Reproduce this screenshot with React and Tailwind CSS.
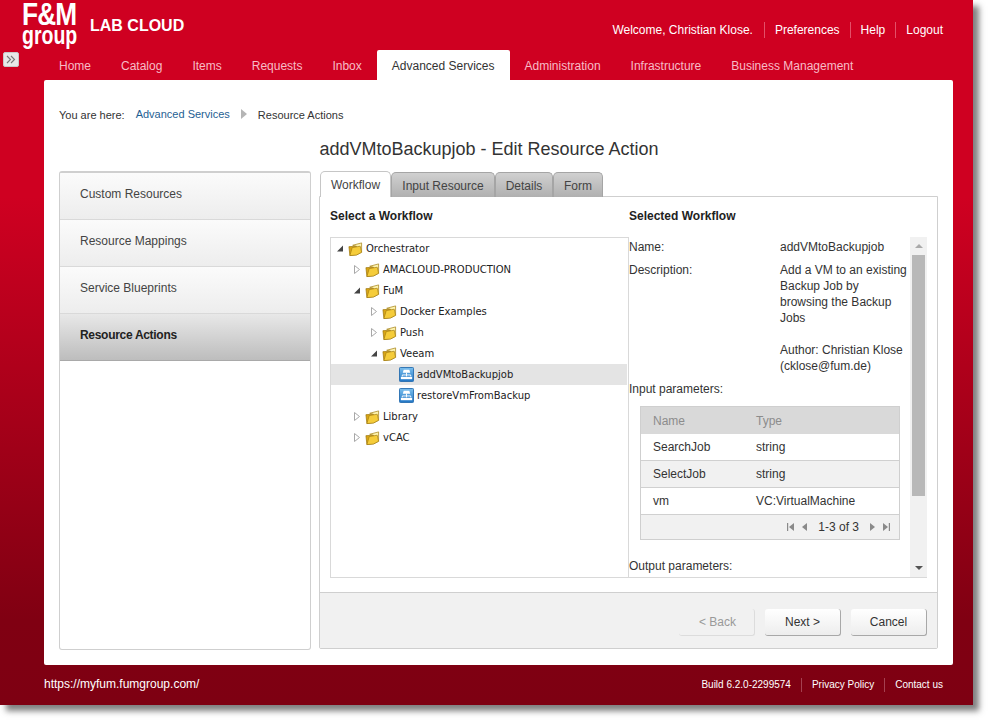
import React from "react";

const Folder = () => (
  <svg width="15" height="16" viewBox="0 0 16 16" className="shrink-0">
    <path d="M1 5.5 L9 5 L9.5 14 L2 15 Z" fill="#d9a514" stroke="#a07a10" strokeWidth="0.8" />
    <path d="M5 4 L14.5 1.5 L14.5 11.5 L9.5 14 L9 5 Z" fill="#fdf3b0" stroke="#a8861c" strokeWidth="0.8" />
    <path d="M2 15 L4.5 6.5 L13 5 L14.5 11.5 L9 14.5 Z" fill="#f5cc3a" stroke="#a07a10" strokeWidth="0.7" />
  </svg>
);

const Flow = () => (
  <svg width="15" height="15" viewBox="0 0 16 16" className="shrink-0">
    <defs>
      <linearGradient id="flowg" x1="0" y1="0" x2="0" y2="1">
        <stop offset="0" stopColor="#7cc0ee" />
        <stop offset="1" stopColor="#1f74c4" />
      </linearGradient>
    </defs>
    <rect x="0.5" y="0.5" width="15" height="15" rx="1" fill="url(#flowg)" stroke="#2a6fb0" />
    <path d="M5 3 H11 L12 6 H4 Z" fill="#fff" />
    <path d="M8 6 V10 M3.5 10 V8.5 H12.5 V10" stroke="#fff" strokeWidth="1" fill="none" />
    <rect x="2" y="10.5" width="12" height="2.5" fill="#fff" />
  </svg>
);

const Caret = ({ open }) => (
  <svg width="8" height="9" viewBox="0 0 8 9" className="shrink-0">
    {open ? (
      <path d="M1 7.5 L7 7.5 L7 1.5 Z" fill="#444" />
    ) : (
      <path d="M1.5 0.5 L6.5 4.5 L1.5 8.5 Z" fill="#fff" stroke="#a8a8a8" />
    )}
  </svg>
);

const treeRows = [
  { d: 0, t: "Orchestrator", c: "open", i: "f" },
  { d: 1, t: "AMACLOUD-PRODUCTION", c: "closed", i: "f" },
  { d: 1, t: "FuM", c: "open", i: "f" },
  { d: 2, t: "Docker Examples", c: "closed", i: "f" },
  { d: 2, t: "Push", c: "closed", i: "f" },
  { d: 2, t: "Veeam", c: "open", i: "f" },
  { d: 3, t: "addVMtoBackupjob", i: "w", sel: true },
  { d: 3, t: "restoreVmFromBackup", i: "w" },
  { d: 1, t: "Library", c: "closed", i: "f" },
  { d: 1, t: "vCAC", c: "closed", i: "f" },
];

const padClass = ["pl-[5px]", "pl-[22px]", "pl-[39px]", "pl-[56px]"];

function TreeRow({ r }) {
  return (
    <div className={`mr-[1px] flex h-[21px] items-center ${padClass[r.d]} ${r.sel ? "bg-[#e4e4e4]" : ""}`}>
      <div className="flex w-[12px] shrink-0 items-center">{r.c && <Caret open={r.c === "open"} />}</div>
      <div className="flex w-[18px] shrink-0 items-center justify-start">{r.i === "f" ? <Folder /> : <Flow />}</div>
      <span className="font-['DejaVu_Sans'] text-[10px] text-[#222]">{r.t}</span>
    </div>
  );
}

const TopNav = ["Home", "Catalog", "Items", "Requests", "Inbox"];
const TopNav2 = ["Administration", "Infrastructure", "Business Management"];

const PagerIcon = ({ d }) => (
  <svg width="9" height="10" viewBox="0 0 9 10">
    <path d={d} fill="#8a8a8a" />
  </svg>
);

export default function App() {
  return (
    <div className="h-[720px] w-[988px] overflow-hidden bg-white font-['Liberation_Sans',sans-serif]">
      <div className="flex h-[705px] w-[973px] flex-col bg-[linear-gradient(180deg,#cf0021_0%,#cf0021_28%,#800012_88%,#7e0012_100%)] shadow-[6px_6px_6px_rgba(60,60,60,0.65)]">
        {/* Header */}
        <div className="flex h-[50px] shrink-0">
          <div className="ml-[22px] flex w-[68px] flex-col items-start pt-[2px] text-white">
            <div className="h-[24px] origin-left scale-x-[0.82] whitespace-nowrap text-[32px] leading-[24px] font-bold tracking-[-1px]">F&amp;M</div>
            <div className="h-[22px] origin-left scale-x-[0.78] whitespace-nowrap text-[25px] leading-[18px] font-bold">group</div>
          </div>
          <div className="pt-[17px] text-[16px] leading-[18px] font-bold text-white">LAB CLOUD</div>
          <div className="ml-auto mr-[30px] flex items-start pt-[22px] text-[12px] leading-[16px] text-white">
            <span className="border-r border-[#e35068] pr-[11px]">Welcome, Christian Klose.</span>
            <span className="border-r border-[#e35068] px-[10px]">Preferences</span>
            <span className="border-r border-[#e35068] px-[10px]">Help</span>
            <span className="pl-[10px]">Logout</span>
          </div>
        </div>
        {/* Nav */}
        <div className="relative flex h-[30px] shrink-0 pl-[44px] text-[12px] text-[#f7bcc6]">
          <div className="absolute left-[3px] top-[2px] flex h-[15px] w-[16px] items-center justify-center rounded-[2px] border border-[#c9c9c9] bg-[#e8e8e8]">
            <svg width="10" height="9" viewBox="0 0 10 9" fill="none" stroke="#777" strokeWidth="1.1">
              <path d="M1 1 L4.5 4.5 L1 8 M5 1 L8.5 4.5 L5 8" />
            </svg>
          </div>
          {TopNav.map((n) => (
            <div key={n} className="flex items-center px-[15px] pt-[2px]">{n}</div>
          ))}
          <div className="flex items-center rounded-t-[2px] bg-white px-[15px] pt-[2px] text-[#333]">Advanced Services</div>
          {TopNav2.map((n) => (
            <div key={n} className="flex items-center px-[15px] pt-[2px]">{n}</div>
          ))}
        </div>
        {/* Main */}
        <div className="ml-[44px] flex h-[585px] w-[909px] shrink-0 flex-col rounded-[2px] bg-white px-[15px] text-[#333]">
          <div className="flex h-[35px] shrink-0 items-center gap-[11px] pt-[34px] text-[11px] leading-[14px]">
            <span>You are here:</span>
            <span className="mb-[2px] text-[#1f5f93]">Advanced Services</span>
            <svg width="6" height="10" viewBox="0 0 6 10" className="mb-[2px]"><path d="M0 0 L6 5 L0 10 Z" fill="#b5b5b5" /></svg>
            <span>Resource Actions</span>
          </div>
          <div className="mt-[21px] flex h-[26px] shrink-0 items-center justify-center pr-[19px] text-[18px] text-[#333]">
            addVMtoBackupjob - Edit Resource Action
          </div>
          <div className="mt-[9px] flex h-[479px] gap-[8px]">
            {/* Sidebar */}
            <div className="h-[479px] w-[252px] shrink-0 overflow-hidden rounded-[3px] border border-[#cfcfcf] border-t-[2px] bg-white text-[12px]">
              {["Custom Resources", "Resource Mappings", "Service Blueprints"].map((s) => (
                <div key={s} className="flex h-[47px] items-center border-b border-[#d9d9d9] bg-[linear-gradient(180deg,#fbfbfb,#ededed)] pb-[4px] pl-[20px] text-[#444]">{s}</div>
              ))}
              <div className="flex h-[47px] items-center border-b border-[#a9a9a9] bg-[linear-gradient(180deg,#e8e8e8,#bdbdbd)] pb-[4px] pl-[20px] font-bold tracking-[-0.3px] text-[#222]">Resource Actions</div>
            </div>
            {/* Right */}
            <div className="flex h-[479px] w-[619px] shrink-0 flex-col">
              <div className="relative z-10 ml-[1px] flex h-[26px] shrink-0 items-end text-[12px]">
                <div className="flex h-[26px] w-[71px] items-center justify-center rounded-t-[5px] border border-b-0 border-[#c6c6c6] bg-white pt-[1px] text-[#444]">Workflow</div>
                <div className="flex h-[25px] w-[104px] items-center justify-center rounded-t-[5px] border border-b-0 border-[#a5a5a5] bg-[linear-gradient(180deg,#d0d0d0,#b0b0b0)] pt-[1px] text-[#444]">Input Resource</div>
                <div className="flex h-[25px] w-[58px] items-center justify-center rounded-t-[5px] border border-b-0 border-[#a5a5a5] bg-[linear-gradient(180deg,#d0d0d0,#b0b0b0)] pt-[1px] text-[#444]">Details</div>
                <div className="flex h-[25px] w-[50px] items-center justify-center rounded-t-[5px] border border-b-0 border-[#a5a5a5] bg-[linear-gradient(180deg,#d0d0d0,#b0b0b0)] pt-[1px] text-[#444]">Form</div>
              </div>
              <div className="-mt-px flex h-[453px] flex-col rounded-b-[2px] border border-[#cfcfcf]">
                <div className="flex h-[395px] shrink-0 pl-[10px] pr-[10px]">
                  <div className="w-[299px] shrink-0">
                    <div className="flex h-[40px] items-center pb-[3px] text-[12px] font-bold text-[#222]">Select a Workflow</div>
                    <div className="h-[341px] border border-[#d9d9d9]">
                      {treeRows.map((r) => (
                        <TreeRow key={r.t} r={r} />
                      ))}
                    </div>
                  </div>
                  <div className="w-[298px] shrink-0">
                    <div className="flex h-[40px] items-center pb-[3px] text-[12px] font-bold text-[#222]">Selected Workflow</div>
                    <div className="flex h-[341px] border-b border-[#d9d9d9] text-[12px] leading-[16px] text-[#333]">
                      <div className="h-full w-[281px] shrink-0 overflow-hidden pt-[2px]">
                        <div className="flex h-[23px]">
                          <div className="w-[151px] shrink-0">Name:</div>
                          <div>addVMtoBackupjob</div>
                        </div>
                        <div className="flex">
                          <div className="w-[151px] shrink-0">Description:</div>
                          <div className="w-[130px]">
                            Add a VM to an existing<br />Backup Job by<br />browsing the Backup<br />Jobs
                            <div className="h-[16px]" />
                            Author: Christian Klose<br />(cklose@fum.de)
                          </div>
                        </div>
                        <div className="mt-[7px]">Input parameters:</div>
                        <div className="ml-[11px] mt-[9px] w-[260px] border border-[#cfcfcf]">
                          <div className="flex h-[27px] items-center bg-[#d9d9d9] pl-[12px] text-[#8c8c8c]">
                            <div className="w-[103px]">Name</div><div>Type</div>
                          </div>
                          <div className="flex h-[27px] items-center border-b border-[#d0d0d0] bg-white pl-[12px]">
                            <div className="w-[103px]">SearchJob</div><div>string</div>
                          </div>
                          <div className="flex h-[27px] items-center border-b border-[#d0d0d0] bg-[#f1f1f1] pl-[12px]">
                            <div className="w-[103px]">SelectJob</div><div>string</div>
                          </div>
                          <div className="flex h-[27px] items-center border-b border-[#d0d0d0] bg-white pl-[12px]">
                            <div className="w-[103px]">vm</div><div>VC:VirtualMachine</div>
                          </div>
                          <div className="flex h-[24px] items-center justify-end gap-[5px] bg-[#f1f1f1] pr-[8px]">
                            <PagerIcon d="M1 1 H2.2 V9 H1 Z M8 1 V9 L3 5 Z" />
                            <PagerIcon d="M7 1 V9 L2 5 Z" />
                            <span className="mx-[4px]">1-3 of 3</span>
                            <PagerIcon d="M2 1 V9 L7 5 Z" />
                            <PagerIcon d="M1 1 V9 L6 5 Z M6.8 1 H8 V9 H6.8 Z" />
                          </div>
                        </div>
                        <div className="mt-[18px]">Output parameters:</div>
                      </div>
                      <div className="flex h-full w-[17px] shrink-0 flex-col items-center bg-[#f1f1f1]">
                        <div className="flex h-[18px] shrink-0 items-center">
                          <svg width="8" height="4" viewBox="0 0 8 4"><path d="M0 4 L4 0 L8 4 Z" fill="#aaa" /></svg>
                        </div>
                        <div className="h-[241px] w-[13px] shrink-0 bg-[#b8b8b8]" />
                        <div className="mt-auto flex h-[18px] shrink-0 items-center">
                          <svg width="8" height="4" viewBox="0 0 8 4"><path d="M0 0 L8 0 L4 4 Z" fill="#555" /></svg>
                        </div>
                      </div>
                    </div>
                  </div>
                </div>
                <div className="flex flex-1 items-start justify-end gap-[10px] border-t border-[#cfcfcf] bg-[#f1f1f1] pr-[10px] pt-[16px] text-[12px]">
                  <div className="flex h-[27px] w-[76px] items-center justify-center rounded-[3px] border-r border-b border-[#dcdcdc] bg-[#f1f1f1] pl-[2px] text-[#999]">&lt; Back</div>
                  <div className="flex h-[27px] w-[76px] items-center justify-center rounded-[3px] border-r border-b border-[#a8a8a8] bg-[linear-gradient(180deg,#ffffff,#ededed)] text-[#333]">Next &gt;</div>
                  <div className="flex h-[27px] w-[76px] items-center justify-center rounded-[3px] border-r border-b border-[#a8a8a8] bg-[linear-gradient(180deg,#ffffff,#ededed)] text-[#333]">Cancel</div>
                </div>
              </div>
            </div>
          </div>
        </div>
        {/* Footer */}
        <div className="flex flex-1 items-start justify-between pl-[44px] pr-[30px] pt-[11px] text-white">
          <span className="text-[12px] leading-[16px]">https://myfum.fumgroup.com/</span>
          <div className="flex pt-[2px] text-[10px] leading-[14px]">
            <span className="border-r border-[#a54050] pr-[10px]">Build 6.2.0-2299574</span>
            <span className="border-r border-[#a54050] px-[10px]">Privacy Policy</span>
            <span className="pl-[10px]">Contact us</span>
          </div>
        </div>
      </div>
    </div>
  );
}
